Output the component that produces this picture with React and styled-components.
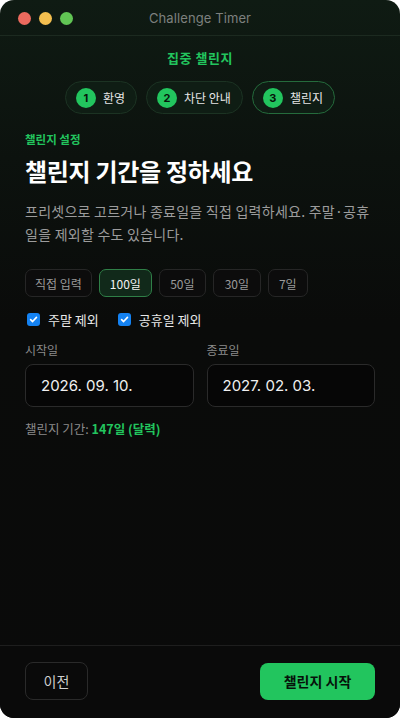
import React from "react";
import styled, { createGlobalStyle } from "styled-components";

const Global = createGlobalStyle`
  html, body { margin: 0; padding: 0; background: #ffffff; }
  body { font-family: Inter, "Noto Sans CJK KR", "Noto Sans", sans-serif; }
  * { box-sizing: border-box; }
`;

const Window = styled.div`
  width: 400px;
  height: 718px;
  border-radius: 14px;
  overflow: hidden;
  display: flex;
  flex-direction: column;
  background: linear-gradient(180deg, #0f1b13 0%, #0c120e 22%, #0a0b0a 45%, #0a0a0a 100%);
`;

const TitleBar = styled.div`
  height: 36px;
  flex: none;
  position: relative;
  display: flex;
  align-items: center;
  justify-content: center;
  border-bottom: 1px solid #1c2a20;
`;

const Lights = styled.div`
  position: absolute;
  left: 18px;
  top: 12px;
  display: flex;
  gap: 8px;
`;

const Light = styled.span`
  width: 13px;
  height: 13px;
  border-radius: 50%;
  background: ${(p) => p.$c};
`;

const Title = styled.div`
  font-size: 13px;
  color: #7d807e;
  letter-spacing: 0.1px;
`;

const Body = styled.div`
  flex: 1;
  display: flex;
  flex-direction: column;
  padding: 0 25px;
`;

const Brand = styled.div`
  text-align: center;
  color: #22c55e;
  font-weight: 700;
  font-size: 13px;
  margin-top: 12px;
  letter-spacing: 0.5px;
  font-family: "Noto Sans CJK KR", sans-serif;
`;

const Steps = styled.div`
  display: flex;
  justify-content: center;
  gap: 9px;
  margin-top: 14px;
`;

const Step = styled.div`
  height: 33px;
  display: flex;
  align-items: center;
  gap: 7px;
  padding: 0 11px 0 10px;
  border-radius: 17px;
  background: #0f1d14;
  border: 1px solid ${(p) => (p.$active ? "#256b3c" : "#1c3323")};
  color: #e6e6e6;
  font-size: 12px;
  font-family: "Noto Sans CJK KR", sans-serif;
`;

const StepNum = styled.span`
  width: 20px;
  height: 20px;
  border-radius: 50%;
  background: #22c55e;
  color: #07140b;
  font-size: 11px;
  font-weight: 700;
  display: flex;
  align-items: center;
  justify-content: center;
  font-family: Inter, sans-serif;
`;

const Eyebrow = styled.div`
  margin-top: 17px;
  color: #22c55e;
  font-size: 11.5px;
  font-weight: 600;
  font-family: "Noto Sans CJK KR", sans-serif;
`;

const Heading = styled.h1`
  margin: 6px 0 0;
  color: #ffffff;
  font-size: 24px;
  font-weight: 700;
  letter-spacing: -0.3px;
  font-family: "Noto Sans CJK KR", sans-serif;
`;

const Desc = styled.p`
  margin: 12px 0 0;
  color: #9c9c9c;
  font-size: 14px;
  letter-spacing: 0.25px;
  line-height: 23px;
  font-family: "Noto Sans CJK KR", sans-serif;
`;

const Presets = styled.div`
  display: flex;
  gap: 7px;
  margin-top: 23px;
`;

const Preset = styled.button`
  height: 28px;
  padding: 0 ${(p) => (p.$wide ? "9px" : "10px")};
  border-radius: 7px;
  background: ${(p) => (p.$active ? "#11291a" : "#0c0c0c")};
  border: 1px solid ${(p) => (p.$active ? "#2f7f47" : "#262626")};
  color: ${(p) => (p.$active ? "#f2f2f2" : "#9a9a9a")};
  font-size: 12px;
  font-family: "Noto Sans CJK KR", sans-serif;
  cursor: pointer;
  min-width: ${(p) => p.$min || "auto"};
`;

const Checks = styled.div`
  display: flex;
  gap: 17px;
  margin-top: 13px;
`;

const CheckLabel = styled.label`
  display: flex;
  align-items: center;
  gap: 8px;
  color: #e8e8e8;
  font-size: 13px;
  font-family: "Noto Sans CJK KR", sans-serif;
`;

const CheckBox = styled.span`
  width: 13px;
  height: 13px;
  border-radius: 3px;
  background: #1482f2;
  display: flex;
  align-items: center;
  justify-content: center;
  margin-left: 2px;
`;

const Fields = styled.div`
  display: grid;
  grid-template-columns: 1fr 1fr;
  gap: 13px;
  margin-top: 12px;
`;

const Field = styled.div`
  display: flex;
  flex-direction: column;
  gap: 6px;
`;

const FieldLabel = styled.div`
  color: #8a8a8a;
  font-size: 12px;
  font-family: "Noto Sans CJK KR", sans-serif;
`;

const DateBox = styled.div`
  height: 43px;
  border-radius: 8px;
  border: 1px solid #2a2a2a;
  background: #060606;
  display: flex;
  align-items: center;
  padding-left: 15px;
  color: #f0f0f0;
  font-size: 15px;
  letter-spacing: 0;
  font-family: Inter, sans-serif;
`;

const Summary = styled.div`
  margin-top: 12px;
  color: #8a8a8a;
  font-size: 12.5px;
  font-family: "Noto Sans CJK KR", sans-serif;
`;

const Strong = styled.span`
  color: #22c55e;
  font-weight: 700;
`;

const Footer = styled.div`
  height: 73px;
  flex: none;
  border-top: 1px solid #1e1e1e;
  background: #0a0a0a;
  display: flex;
  align-items: center;
  justify-content: space-between;
  padding: 0 25px 2px;
`;

const GhostBtn = styled.button`
  height: 38px;
  width: 63px;
  border-radius: 8px;
  background: transparent;
  border: 1px solid #2a2a2a;
  color: #cfcfcf;
  font-size: 14px;
  font-family: "Noto Sans CJK KR", sans-serif;
`;

const PrimaryBtn = styled.button`
  height: 37px;
  width: 115px;
  border-radius: 8px;
  background: #22c55e;
  border: none;
  color: #06120a;
  font-weight: 700;
  font-size: 14px;
  font-family: "Noto Sans CJK KR", sans-serif;
`;

const Check = () => (
  <CheckBox>
    <svg width="9" height="9" viewBox="0 0 10 10">
      <path d="M1.8 5.2 L4 7.3 L8.3 2.6" fill="none" stroke="#fff" strokeWidth="1.8" strokeLinecap="round" strokeLinejoin="round" />
    </svg>
  </CheckBox>
);

export default function App() {
  return (
    <>
      <Global />
      <Window>
        <TitleBar>
          <Lights>
            <Light $c="#ec6a5e" />
            <Light $c="#f4bf4f" />
            <Light $c="#61c554" />
          </Lights>
          <Title>Challenge Timer</Title>
        </TitleBar>
        <Body>
          <Brand>집중 챌린지</Brand>
          <Steps>
            <Step><StepNum>1</StepNum>환영</Step>
            <Step><StepNum>2</StepNum>차단 안내</Step>
            <Step $active><StepNum>3</StepNum>챌린지</Step>
          </Steps>
          <Eyebrow>챌린지 설정</Eyebrow>
          <Heading>챌린지 기간을 정하세요</Heading>
          <Desc>프리셋으로 고르거나 종료일을 직접 입력하세요. 주말·공휴일을 제외할 수도 있습니다.</Desc>
          <Presets>
            <Preset $wide>직접 입력</Preset>
            <Preset $active>100일</Preset>
            <Preset $min="47px">50일</Preset>
            <Preset $min="48px">30일</Preset>
            <Preset $min="39px">7일</Preset>
          </Presets>
          <Checks>
            <CheckLabel><Check />주말 제외</CheckLabel>
            <CheckLabel><Check />공휴일 제외</CheckLabel>
          </Checks>
          <Fields>
            <Field>
              <FieldLabel>시작일</FieldLabel>
              <DateBox>2026. 09. 10.</DateBox>
            </Field>
            <Field>
              <FieldLabel>종료일</FieldLabel>
              <DateBox>2027. 02. 03.</DateBox>
            </Field>
          </Fields>
          <Summary>챌린지 기간: <Strong>147일 (달력)</Strong></Summary>
        </Body>
        <Footer>
          <GhostBtn>이전</GhostBtn>
          <PrimaryBtn>챌린지 시작</PrimaryBtn>
        </Footer>
      </Window>
    </>
  );
}
